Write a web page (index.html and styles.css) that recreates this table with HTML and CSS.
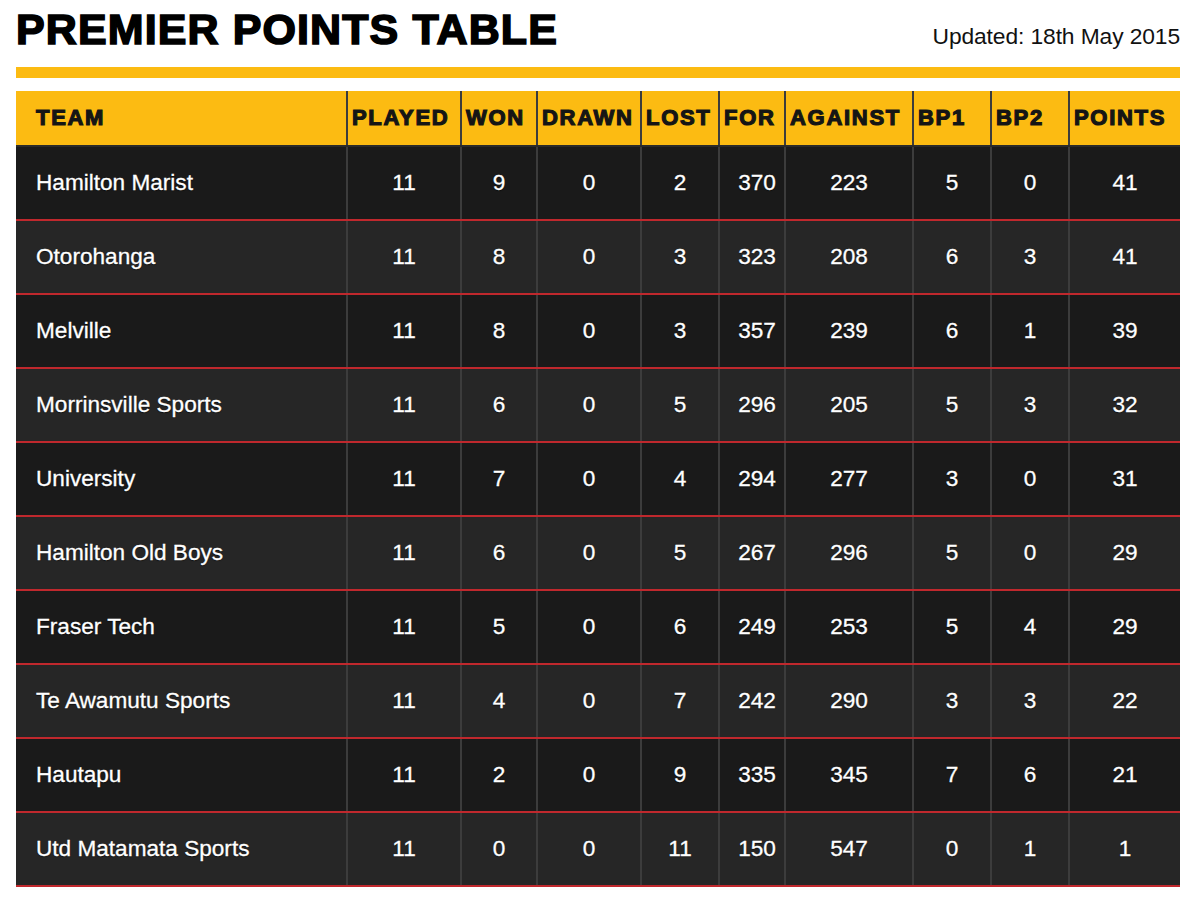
FILE: index.html
```html
<!DOCTYPE html>
<html lang="en">
<head>
<meta charset="utf-8">
<title>Premier Points Table</title>
<link rel="stylesheet" href="styles.css">
</head>
<body>
<div class="page">
  <header class="top">
    <h1 class="title">PREMIER POINTS TABLE</h1>
    <div class="updated">Updated: 18th May 2015</div>
  </header>
  <div class="bar"></div>
  <table class="points">
    <colgroup>
      <col class="c-team"><col class="c-played"><col class="c-won"><col class="c-drawn"><col class="c-lost"><col class="c-for"><col class="c-against"><col class="c-bp"><col class="c-bp"><col class="c-points">
    </colgroup>
    <thead>
      <tr>
        <th class="team">TEAM</th><th>PLAYED</th><th>WON</th><th>DRAWN</th><th>LOST</th><th>FOR</th><th>AGAINST</th><th>BP1</th><th>BP2</th><th>POINTS</th>
      </tr>
    </thead>
    <tbody>
      <tr><td class="team">Hamilton Marist</td><td>11</td><td>9</td><td>0</td><td>2</td><td class="for">370</td><td>223</td><td>5</td><td>0</td><td>41</td></tr>
      <tr><td class="team">Otorohanga</td><td>11</td><td>8</td><td>0</td><td>3</td><td class="for">323</td><td>208</td><td>6</td><td>3</td><td>41</td></tr>
      <tr><td class="team">Melville</td><td>11</td><td>8</td><td>0</td><td>3</td><td class="for">357</td><td>239</td><td>6</td><td>1</td><td>39</td></tr>
      <tr><td class="team">Morrinsville Sports</td><td>11</td><td>6</td><td>0</td><td>5</td><td class="for">296</td><td>205</td><td>5</td><td>3</td><td>32</td></tr>
      <tr><td class="team">University</td><td>11</td><td>7</td><td>0</td><td>4</td><td class="for">294</td><td>277</td><td>3</td><td>0</td><td>31</td></tr>
      <tr><td class="team">Hamilton Old Boys</td><td>11</td><td>6</td><td>0</td><td>5</td><td class="for">267</td><td>296</td><td>5</td><td>0</td><td>29</td></tr>
      <tr><td class="team">Fraser Tech</td><td>11</td><td>5</td><td>0</td><td>6</td><td class="for">249</td><td>253</td><td>5</td><td>4</td><td>29</td></tr>
      <tr><td class="team">Te Awamutu Sports</td><td>11</td><td>4</td><td>0</td><td>7</td><td class="for">242</td><td>290</td><td>3</td><td>3</td><td>22</td></tr>
      <tr><td class="team">Hautapu</td><td>11</td><td>2</td><td>0</td><td>9</td><td class="for">335</td><td>345</td><td>7</td><td>6</td><td>21</td></tr>
      <tr><td class="team">Utd Matamata Sports</td><td>11</td><td>0</td><td>0</td><td>11</td><td class="for">150</td><td>547</td><td>0</td><td>1</td><td>1</td></tr>
    </tbody>
  </table>
</div>
</body>
</html>
```

FILE: styles.css
```css
html, body {
  margin: 0;
  padding: 0;
  background: #ffffff;
}

body {
  font-family: "Liberation Sans", Arial, Helvetica, sans-serif;
  color: #111111;
}

.page {
  width: 1164px;
  padding: 0 20px 0 16px;
}

.top {
  display: flex;
  justify-content: space-between;
  align-items: baseline;
  height: 56px;
  padding-top: 4px;
}

.title {
  margin: 0;
  font-size: 43px;
  line-height: 50px;
  font-weight: 700;
  letter-spacing: 1.1px;
  color: #000000;
  -webkit-text-stroke: 1.6px #000000;
}

.updated {
  font-size: 22.8px;
  color: #111111;
  letter-spacing: -0.1px;
}

.bar {
  height: 11px;
  background: #fcbb12;
  margin-top: 7px;
}

.points {
  margin-top: 13px;
  width: 1164px;
  table-layout: fixed;
  border-collapse: collapse;
  border-spacing: 0;
}

.c-team { width: 331px; }
.c-played { width: 114px; }
.c-won { width: 76px; }
.c-drawn { width: 104px; }
.c-lost { width: 78px; }
.c-for { width: 66px; }
.c-against { width: 128px; }
.c-bp { width: 78px; }
.c-points { width: 111px; }

.points th {
  background: #fcbb12;
  height: 54px;
  padding: 0 0 0 4px;
  text-align: left;
  vertical-align: middle;
  font-size: 22px;
  font-weight: 700;
  letter-spacing: 1.7px;
  color: #151515;
  -webkit-text-stroke: 1.2px #151515;
  border-left: 2px solid #3c3c3c;
  border-bottom: 2px solid #2a2a2a;
  white-space: nowrap;
}

.points th.team {
  padding-left: 20px;
  border-left: none;
}

.points td {
  height: 72px;
  padding: 0;
  text-align: center;
  vertical-align: middle;
  font-size: 22.6px;
  color: #ffffff;
  -webkit-text-stroke: 0.3px #ffffff;
  text-shadow: 0 1px 1px rgba(0, 0, 0, 0.6);
  border-left: 2px solid #3c3c3c;
  border-bottom: 2px solid #c0282d;
  white-space: nowrap;
}

.points td.for {
  padding-left: 10px;
}

.points td.team {
  text-align: left;
  padding-left: 20px;
  border-left: none;
}

.points tbody tr:nth-child(odd) td {
  background: #1a1a1a;
}

.points tbody tr:nth-child(even) td {
  background: #262626;
}
```
